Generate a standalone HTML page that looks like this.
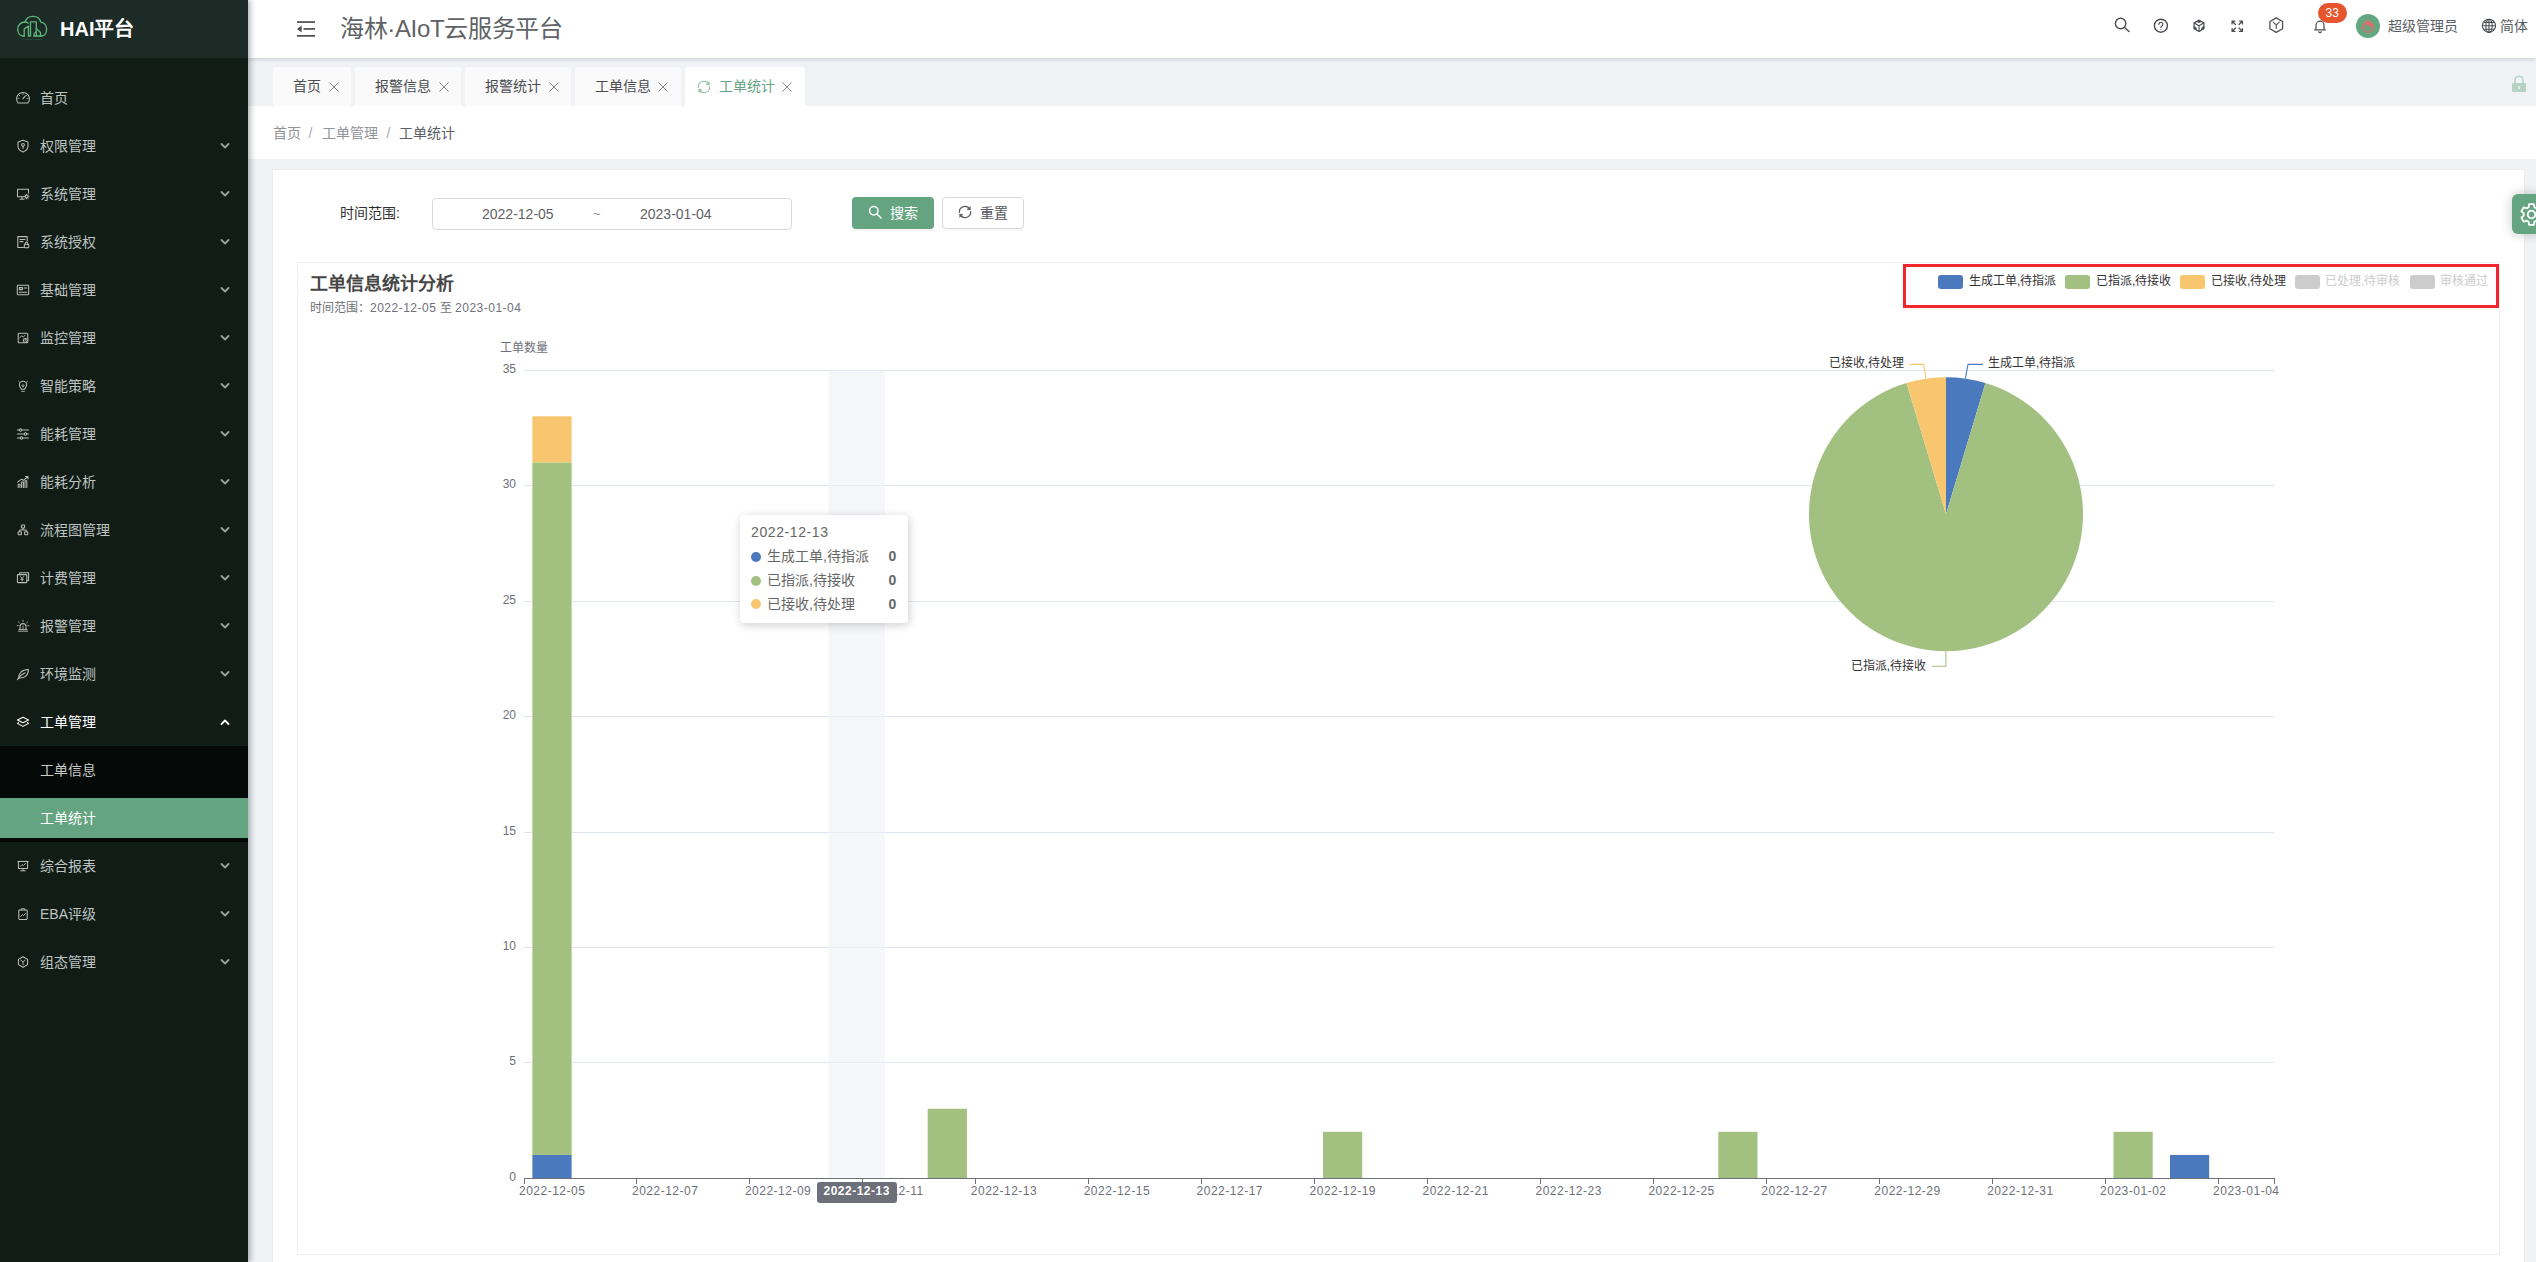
<!DOCTYPE html>
<html lang="zh-CN">
<head>
<meta charset="utf-8">
<title>海林·AIoT云服务平台</title>
<style>
*{box-sizing:border-box;}
html,body{margin:0;padding:0;}
body{width:2536px;height:1262px;overflow:hidden;background:#f0f2f5;font-family:"Liberation Sans",sans-serif;font-size:14px;color:#606266;position:relative;}
.abs{position:absolute;}
svg{display:block;overflow:visible;}
/* sidebar */
#side{position:absolute;left:0;top:0;width:248px;height:1262px;background:#111c17;box-shadow:2px 0 6px rgba(0,21,41,.35);z-index:5;}
#logo{position:absolute;left:0;top:0;width:248px;height:58px;background:#1c2b25;}
#logo .t{position:absolute;left:60px;top:16px;font-size:20px;line-height:26px;font-weight:bold;color:#fff;white-space:nowrap;}
.mi{position:absolute;left:0;width:248px;height:48px;line-height:48px;color:#bfc4c1;font-size:14px;white-space:nowrap;}
.mi .tx{position:absolute;left:40px;top:0;}
.mi svg.ic{position:absolute;left:16px;top:17px;width:14px;height:14px;}
.mi svg.ar{position:absolute;left:220px;top:20px;width:10px;height:8px;}
/* header */
#head{position:absolute;left:248px;top:0;width:2288px;height:58px;background:#fff;box-shadow:0 1px 5px rgba(0,21,41,.18);z-index:3;}
#head .title{position:absolute;left:92px;top:11px;font-size:24px;line-height:36px;color:#606266;white-space:nowrap;letter-spacing:-0.35px;}
#head .hi{position:absolute;}
/* tabs */
#tabs{position:absolute;left:248px;top:58px;width:2288px;height:48px;background:#f0f2f5;}
.tab{position:absolute;top:9px;height:39px;background:#fafafa;border-radius:4px 4px 0 0;font-size:14px;line-height:38px;color:#4a4d52;white-space:nowrap;}
.tab .tx{position:absolute;top:0;}
.tab svg.x{position:absolute;top:14.500px;width:10px;height:10px;}
.tab.on{background:#fff;color:#64a480;}
/* breadcrumb */
#crumb{position:absolute;left:248px;top:106px;width:2288px;height:53px;background:#fff;font-size:14px;line-height:55px;color:#909399;white-space:nowrap;}
/* card */
#card{position:absolute;left:272px;top:169px;width:2253px;height:1100px;background:#fff;border:1px solid #ececec;}
#chartbox{position:absolute;left:297px;top:262px;width:2203px;height:993px;border:1px solid #eeeeee;background:#fff;}
.lbl{position:absolute;white-space:nowrap;}
.ct{position:absolute;white-space:nowrap;font-size:12px;line-height:14px;color:#6e7079;}
.dl{letter-spacing:0.5px;}
</style>
</head>
<body>

<div id="side">
  <div id="logo">
    <svg class="abs" style="left:16.800px;top:15px;width:30.400px;height:24.700px" viewBox="0 0 32 26" fill="none" stroke="#5db779" stroke-width="1.4" stroke-linecap="round" stroke-linejoin="round">
      <path d="M7.6 22.1 H5.8 C2.800 21.700 .800 18.600 .800 14.900 C.800 10.700 4.100 7.400 8.300 7.400 C9.700 7.400 10.900 7.800 11.900 8.600"/>
      <path d="M8.400 7.500 C9.400 3.900 12.800 1.400 16.800 1.400 C20.800 1.400 24.100 3.900 25.100 7.500 C28.600 8 31.200 11.100 31.200 15 C31.200 18.700 29 21.700 26.300 22.100 H17.600"/>
      <path d="M7.600 22.100 V14.600 L12 11.600 V22.100 H14.200 V7.200 H20.300 V22.100"/>
      <path d="M20.300 14.100 L24.700 18.500 V22.100"/>
      <path d="M18 22.100 V19.400 L20.300 17.600" stroke-width="1.1"/>
      <text x="16" y="26.400" text-anchor="middle" font-size="2.600" font-family="Liberation Sans, sans-serif" fill="#4f9a67" fill-opacity=".7" stroke="none" textLength="21.500" lengthAdjust="spacingAndGlyphs">HAILIN PLATFORM</text>
    </svg>
    <div class="t">HAI平台</div>
  </div>
  <div class="mi" style="top:74px"><svg class="ic" viewBox="0 0 14 14" style="color:#b9beba" fill="none" stroke="currentColor" stroke-width="1.05" stroke-linecap="round" stroke-linejoin="round"><path d="M2.100 12 A6.400 6.400 0 1 1 11.900 12 Z"/><path d="M6.800 7.800 L9.300 4.900"/><path d="M7 2.6v1M3.2 4.2l.7.7M10.8 4.2l-.7.7M2 7.4h1M11 7.4h1" stroke-width=".8"/></svg><span class="tx">首页</span></div>
  <div class="mi" style="top:122px"><svg class="ic" viewBox="0 0 14 14" style="color:#b9beba" fill="none" stroke="currentColor" stroke-width="1.05" stroke-linecap="round" stroke-linejoin="round"><path d="M7 1.2 L12 2.9 V7 C12 10 9.8 12 7 13 C4.2 12 2 10 2 7 V2.9 Z"/><circle cx="7" cy="5.8" r="1.4"/><path d="M7 7.2V9.6"/></svg><span class="tx">权限管理</span><svg class="ar" viewBox="0 0 10 8" fill="none" stroke="#9aa09c" stroke-width="1.8" stroke-linecap="round" stroke-linejoin="round"><path d="M1.5 2L5 5.5L8.5 2"/></svg></div>
  <div class="mi" style="top:170px"><svg class="ic" viewBox="0 0 14 14" style="color:#b9beba" fill="none" stroke="currentColor" stroke-width="1.05" stroke-linecap="round" stroke-linejoin="round"><path d="M8 9.8H1.5V2.2H12.5V6"/><path d="M4 12.3H8M6 9.8V12.3"/><circle cx="10.6" cy="9.6" r="1.5"/><path d="M10.6 7.2v.9M10.6 11.1v.9M8.2 9.6h.9M12.1 9.6h.9M8.9 7.9l.6.6M11.7 10.7l.6.6M8.9 11.3l.6-.6M11.7 8.5l.6-.6" stroke-width=".8"/></svg><span class="tx">系统管理</span><svg class="ar" viewBox="0 0 10 8" fill="none" stroke="#9aa09c" stroke-width="1.8" stroke-linecap="round" stroke-linejoin="round"><path d="M1.5 2L5 5.5L8.5 2"/></svg></div>
  <div class="mi" style="top:218px"><svg class="ic" viewBox="0 0 14 14" style="color:#b9beba" fill="none" stroke="currentColor" stroke-width="1.05" stroke-linecap="round" stroke-linejoin="round"><path d="M7.5 12.4H1.8V1.6H11.2V6"/><path d="M4 4.4H9M4 6.6H7"/><rect x="8.3" y="9.2" width="4.4" height="3.6" rx=".5"/><path d="M9.3 9.2V8.2a1.2 1.2 0 0 1 2.4 0V9.2"/></svg><span class="tx">系统授权</span><svg class="ar" viewBox="0 0 10 8" fill="none" stroke="#9aa09c" stroke-width="1.8" stroke-linecap="round" stroke-linejoin="round"><path d="M1.5 2L5 5.5L8.5 2"/></svg></div>
  <div class="mi" style="top:266px"><svg class="ic" viewBox="0 0 14 14" style="color:#b9beba" fill="none" stroke="currentColor" stroke-width="1.05" stroke-linecap="round" stroke-linejoin="round"><rect x="1.3" y="2.3" width="11.4" height="9.4" rx=".6"/><path d="M3.4 4.6H6.4V6.6H3.4ZM8 5H10.8M3.4 9.2H10.8"/></svg><span class="tx">基础管理</span><svg class="ar" viewBox="0 0 10 8" fill="none" stroke="#9aa09c" stroke-width="1.8" stroke-linecap="round" stroke-linejoin="round"><path d="M1.5 2L5 5.5L8.5 2"/></svg></div>
  <div class="mi" style="top:314px"><svg class="ic" viewBox="0 0 14 14" style="color:#b9beba" fill="none" stroke="currentColor" stroke-width="1.05" stroke-linecap="round" stroke-linejoin="round"><rect x="2.200" y="2.200" width="9.600" height="9.600" rx="1"/><path d="M3.800 6.800L5.600 4.800L7.200 5.800L9 4.400" stroke-width=".9"/><circle cx="9.300" cy="9.400" r="1.900"/><path d="M9.300 9.400V8.400" stroke-width=".9"/></svg><span class="tx">监控管理</span><svg class="ar" viewBox="0 0 10 8" fill="none" stroke="#9aa09c" stroke-width="1.8" stroke-linecap="round" stroke-linejoin="round"><path d="M1.5 2L5 5.5L8.5 2"/></svg></div>
  <div class="mi" style="top:362px"><svg class="ic" viewBox="0 0 14 14" style="color:#b9beba" fill="none" stroke="currentColor" stroke-width="1.05" stroke-linecap="round" stroke-linejoin="round"><path d="M5.2 10.2C5.2 8.9 3.4 8.2 3.4 5.8a3.6 3.6 0 0 1 7.2 0C10.6 8.2 8.8 8.9 8.8 10.2Z"/><path d="M5.600 12.300H8.400M7 5.600V7.800M5.900 6.600L7 7.800L8.100 6.600M2.600 2.200L3.400 3M11.400 2.200L10.600 3" stroke-width=".9"/></svg><span class="tx">智能策略</span><svg class="ar" viewBox="0 0 10 8" fill="none" stroke="#9aa09c" stroke-width="1.8" stroke-linecap="round" stroke-linejoin="round"><path d="M1.5 2L5 5.5L8.5 2"/></svg></div>
  <div class="mi" style="top:410px"><svg class="ic" viewBox="0 0 14 14" style="color:#b9beba" fill="none" stroke="currentColor" stroke-width="1.05" stroke-linecap="round" stroke-linejoin="round"><path d="M1.4 3H12.6M1.4 7H12.6M1.4 11H12.6"/><circle cx="4.5" cy="3" r="1.2" fill="#111c17"/><circle cx="9.5" cy="7" r="1.2" fill="#111c17"/><circle cx="5.5" cy="11" r="1.2" fill="#111c17"/></svg><span class="tx">能耗管理</span><svg class="ar" viewBox="0 0 10 8" fill="none" stroke="#9aa09c" stroke-width="1.8" stroke-linecap="round" stroke-linejoin="round"><path d="M1.5 2L5 5.5L8.5 2"/></svg></div>
  <div class="mi" style="top:458px"><svg class="ic" viewBox="0 0 14 14" style="color:#b9beba" fill="none" stroke="currentColor" stroke-width="1.05" stroke-linecap="round" stroke-linejoin="round"><path d="M2.2 12.4V9.2H4V12.4M5.6 12.4V7H7.4V12.4M9 12.4V5.8H10.8V12.4"/><path d="M1.6 7.2L5.6 4.2L7.4 5.4L11.8 1.8M9.6 1.6H12V4"/></svg><span class="tx">能耗分析</span><svg class="ar" viewBox="0 0 10 8" fill="none" stroke="#9aa09c" stroke-width="1.8" stroke-linecap="round" stroke-linejoin="round"><path d="M1.5 2L5 5.5L8.5 2"/></svg></div>
  <div class="mi" style="top:506px"><svg class="ic" viewBox="0 0 14 14" style="color:#b9beba" fill="none" stroke="currentColor" stroke-width="1.05" stroke-linecap="round" stroke-linejoin="round"><rect x="5.400" y="2" width="3.200" height="3" rx=".6"/><rect x="2.200" y="8.800" width="3.200" height="3" rx=".6"/><rect x="8.600" y="8.800" width="3.200" height="3" rx=".6"/><path d="M7 5V7M3.800 8.800V7H10.200V8.800"/></svg><span class="tx">流程图管理</span><svg class="ar" viewBox="0 0 10 8" fill="none" stroke="#9aa09c" stroke-width="1.8" stroke-linecap="round" stroke-linejoin="round"><path d="M1.5 2L5 5.5L8.5 2"/></svg></div>
  <div class="mi" style="top:554px"><svg class="ic" viewBox="0 0 14 14" style="color:#b9beba" fill="none" stroke="currentColor" stroke-width="1.05" stroke-linecap="round" stroke-linejoin="round"><path d="M3.6 3.6V1.8H12.6V9.4H10.8"/><rect x="1.4" y="3.6" width="9.4" height="8" rx=".6"/><path d="M4.6 5.6L6.1 7.6L7.6 5.6M6.1 7.6V10.2M4.8 8.4H7.4" stroke-width=".9"/></svg><span class="tx">计费管理</span><svg class="ar" viewBox="0 0 10 8" fill="none" stroke="#9aa09c" stroke-width="1.8" stroke-linecap="round" stroke-linejoin="round"><path d="M1.5 2L5 5.5L8.5 2"/></svg></div>
  <div class="mi" style="top:602px"><svg class="ic" viewBox="0 0 14 14" style="color:#b9beba" fill="none" stroke="currentColor" stroke-width="1.05" stroke-linecap="round" stroke-linejoin="round"><path d="M4 10.6V7.6a3 3 0 0 1 6 0V10.6"/><path d="M2.4 12.2H11.6M3 10.6H11M7 1.2V2.4M2.4 3l.8.8M11.6 3l-.8.8M1.2 6.6H2.2M11.8 6.6H12.8" stroke-width=".9"/><path d="M7 7V10.6" stroke-width=".8"/></svg><span class="tx">报警管理</span><svg class="ar" viewBox="0 0 10 8" fill="none" stroke="#9aa09c" stroke-width="1.8" stroke-linecap="round" stroke-linejoin="round"><path d="M1.5 2L5 5.5L8.5 2"/></svg></div>
  <div class="mi" style="top:650px"><svg class="ic" viewBox="0 0 14 14" style="color:#b9beba" fill="none" stroke="currentColor" stroke-width="1.05" stroke-linecap="round" stroke-linejoin="round"><path d="M3 11C2.4 6.4 5.4 2.8 12.4 2.6C12.4 8.6 8.6 11.4 3 11Z"/><path d="M1.4 12.8C3 9.8 5.6 7.4 9 5.8"/></svg><span class="tx">环境监测</span><svg class="ar" viewBox="0 0 10 8" fill="none" stroke="#9aa09c" stroke-width="1.8" stroke-linecap="round" stroke-linejoin="round"><path d="M1.5 2L5 5.5L8.5 2"/></svg></div>
  <div class="mi" style="top:698px;color:#fff"><svg class="ic" viewBox="0 0 14 14" style="color:#fff" fill="none" stroke="currentColor" stroke-width="1.05" stroke-linecap="round" stroke-linejoin="round"><path d="M7 2.200L12.600 5L7 7.800L1.400 5Z"/><path d="M2.600 7.600L1.400 8.400L7 11.400L12.600 8.400L11.400 7.600"/></svg><span class="tx">工单管理</span><svg class="ar" viewBox="0 0 10 8" fill="none" stroke="#fff" stroke-width="1.8" stroke-linecap="round" stroke-linejoin="round"><path d="M1.5 6L5 2.5L8.5 6"/></svg></div>
  <div class="abs" style="left:0;top:746px;width:248px;height:96px;background:#050908"></div>
  <div class="mi" style="top:746px;color:#c8ccc9"><span class="tx">工单信息</span></div>
  <div class="abs" style="left:0;top:798px;width:248px;height:40px;background:#64a481"></div>
  <div class="mi" style="top:793.5px;color:#fff"><span class="tx">工单统计</span></div>
  <div class="mi" style="top:842px"><svg class="ic" viewBox="0 0 14 14" style="color:#b9beba" fill="none" stroke="currentColor" stroke-width="1.05" stroke-linecap="round" stroke-linejoin="round"><rect x="2.400" y="2.400" width="9.200" height="7" rx=".4"/><path d="M1.800 2.400H12.200M4.400 7.400L6 5.600L7.400 6.600L9.600 4.400M7 9.400V11.600M4.600 11.800H9.400" stroke-width=".95"/></svg><span class="tx">综合报表</span><svg class="ar" viewBox="0 0 10 8" fill="none" stroke="#9aa09c" stroke-width="1.8" stroke-linecap="round" stroke-linejoin="round"><path d="M1.5 2L5 5.5L8.5 2"/></svg></div>
  <div class="mi" style="top:890px"><svg class="ic" viewBox="0 0 14 14" style="color:#b9beba" fill="none" stroke="currentColor" stroke-width="1.05" stroke-linecap="round" stroke-linejoin="round"><rect x="2.800" y="3" width="8.400" height="9.400" rx=".8"/><path d="M5.200 3V1.800H8.800V3M4.800 9.400L6.400 7.600L7.600 8.600L9.400 6.600" stroke-width=".95"/></svg><span class="tx">EBA评级</span><svg class="ar" viewBox="0 0 10 8" fill="none" stroke="#9aa09c" stroke-width="1.8" stroke-linecap="round" stroke-linejoin="round"><path d="M1.5 2L5 5.5L8.5 2"/></svg></div>
  <div class="mi" style="top:938px"><svg class="ic" viewBox="0 0 14 14" style="color:#b9beba" fill="none" stroke="currentColor" stroke-width="1.05" stroke-linecap="round" stroke-linejoin="round"><path d="M7 1.800L11.600 4.400V9.600L7 12.200L2.400 9.600V4.400Z"/><path d="M4.800 5.200L7 6.800L9.200 5.200M7 6.800V9.800" stroke-width=".9"/></svg><span class="tx">组态管理</span><svg class="ar" viewBox="0 0 10 8" fill="none" stroke="#9aa09c" stroke-width="1.8" stroke-linecap="round" stroke-linejoin="round"><path d="M1.5 2L5 5.5L8.5 2"/></svg></div>
</div>
<div id="head">
  <svg class="abs" style="left:49px;top:20px;width:18px;height:18px" viewBox="0 0 18 18" fill="#4a4d52">
    <rect x="0" y="1.2" width="18" height="1.7"/><rect x="6.5" y="8.1" width="11.5" height="1.7"/><rect x="0" y="15" width="18" height="1.7"/><path d="M0 9 L4.6 5.6 V12.4 Z"/>
  </svg>
  <div class="title">海林·AIoT云服务平台</div>
  <svg class="hi" style="left:1865px;top:16px;width:18px;height:18px" viewBox="0 0 18 18" fill="none" stroke="#4a4d52" stroke-width="1.4" stroke-linecap="round" stroke-linejoin="round"><circle cx="7.6" cy="7.5" r="5.2"/><path d="M11.5 11.4L16 15.6"/></svg>
  <svg class="hi" style="left:1905px;top:18px;width:16px;height:16px" viewBox="0 0 16 16" fill="none" stroke="#4a4d52" stroke-width="1.4" stroke-linecap="round" stroke-linejoin="round"><circle cx="7.9" cy="7.7" r="6.5"/><path d="M5.9 6.3a2 2 0 1 1 3 1.7c-.7.4-1 .8-1 1.6" stroke-width="1.2"/><circle cx="7.9" cy="11.4" r=".5" fill="#4a4d52" stroke="none"/></svg>
  <svg class="hi" style="left:1944px;top:19px;width:14px;height:14px" viewBox="0 0 16 16" fill="none" stroke="#4a4d52" stroke-width="1.4" stroke-linecap="round" stroke-linejoin="round"><path d="M8 1.4L13.6 4.4V11L8 14.2L2.4 11V4.4Z"/><path d="M2.6 4.6L8 7.6L13.4 4.6M8 7.6V14" stroke-width="1.3"/><path d="M8 1.6L10.6 3L8 4.4L5.4 3Z M2.6 8.6L5 10V12.4L2.6 11Z M13.4 8.6L11 10V12.4L13.4 11Z" fill="#4a4d52" stroke-width=".6"/></svg>
  <svg class="hi" style="left:1983px;top:20px;width:12.5px;height:12.5px" viewBox="0 0 14 14" fill="none" stroke="#4a4d52" stroke-width="1.4" stroke-linecap="round" stroke-linejoin="round" stroke-width="1.4"><path d="M1.2 4.4V1.2H4.4M1.4 1.4L5 5M12.8 4.4V1.2H9.6M12.6 1.4L9 5M1.2 9.6V12.8H4.4M1.4 12.6L5 9M12.8 9.6V12.8H9.6M12.6 12.6L9 9"/></svg>
  <svg class="hi" style="left:2021px;top:17px;width:14.500px;height:16.300px" viewBox="0 0 16 18" fill="none" stroke="#4a4d52" stroke-width="1.4" stroke-linecap="round" stroke-linejoin="round" stroke-width="1.2"><path d="M8 1L15 5V13L8 17L1 13V5Z"/><path d="M4.6 5.6L8 8.6L11.4 5.6M8 8.6V12.6" stroke-width="1.2"/></svg>
  <svg class="hi" style="left:2065px;top:18px;width:14px;height:15.700px" viewBox="0 0 16 18" fill="none" stroke="#4a4d52" stroke-width="1.4" stroke-linecap="round" stroke-linejoin="round" stroke-width="1.4"><path d="M3.4 13.4V8.2a4.6 4.6 0 0 1 9.2 0V13.4M1.8 13.6H14.2M6.6 15.8a1.5 1.5 0 0 0 2.8 0"/></svg>
  <div class="abs" style="left:2070px;top:3px;width:28.500px;height:20px;border-radius:10px;background:#e5562f;color:#fff;font-size:12px;line-height:20px;text-align:center;z-index:2">33</div>
  <div class="abs" style="left:2108px;top:14px;width:24px;height:24px;border-radius:12px;background:#63a680"></div>
  <svg class="hi" style="left:2113px;top:19px;width:14px;height:14px" viewBox="0 0 14 14" fill="none" stroke="#d6716f" stroke-width="1.2" stroke-linecap="round"><path d="M1.3 7.6C1.3 4.6 3.4 2.700 6 2.300L6.900 .300L7.800 2.300C10.600 2.700 12.700 4.600 12.700 7.600C9.800 7.600 6.400 6.800 4.700 4.500C4.200 6 3 7.200 1.300 7.600Z" fill="#d6716f" stroke-width=".6"/><path d="M2.100 8.400C2.300 11.200 4.200 13.200 7 13.200C9.800 13.200 11.700 11.200 11.900 8.400"/><circle cx=".9" cy="8.800" r=".7" fill="#d6716f" stroke="none"/><circle cx="13.100" cy="8.800" r=".7" fill="#d6716f" stroke="none"/><path d="M4.500 8.300V9.600M9.500 8.300V9.600" stroke-width=".9"/></svg>
  <div class="abs" style="left:2140px;top:16px;font-size:14px;line-height:20px;color:#5a5e66;white-space:nowrap">超级管理员</div>
  <svg class="hi" style="left:2233px;top:18px;width:16px;height:16px" viewBox="0 0 16 16" fill="none" stroke="#4a4d52" stroke-width="1.1"><circle cx="8" cy="7.8" r="6.6"/><ellipse cx="8" cy="7.8" rx="3.2" ry="6.6"/><path d="M8 1.2V14.4M1.4 7.8H14.6M2.4 4.4H13.6M2.4 11.2H13.6"/></svg>
  <div class="abs" style="left:2252px;top:16px;font-size:14px;line-height:20px;color:#5a5e66;white-space:nowrap">简体</div>
</div>
<div id="tabs">
  <div class="tab" style="left:25px;width:78px"><span class="tx" style="left:20px">首页</span><svg class="x" style="left:56px" viewBox="0 0 10 10" fill="none" stroke="#85888c" stroke-width="1" stroke-linecap="round"><path d="M.7 .7L9.300 9.300M9.300 .7L.7 9.300"/></svg></div>
  <div class="tab" style="left:107px;width:106px"><span class="tx" style="left:20px">报警信息</span><svg class="x" style="left:84px" viewBox="0 0 10 10" fill="none" stroke="#85888c" stroke-width="1" stroke-linecap="round"><path d="M.7 .7L9.300 9.300M9.300 .7L.7 9.300"/></svg></div>
  <div class="tab" style="left:217px;width:106px"><span class="tx" style="left:20px">报警统计</span><svg class="x" style="left:84px" viewBox="0 0 10 10" fill="none" stroke="#85888c" stroke-width="1" stroke-linecap="round"><path d="M.7 .7L9.300 9.300M9.300 .7L.7 9.300"/></svg></div>
  <div class="tab" style="left:327px;width:106px"><span class="tx" style="left:20px">工单信息</span><svg class="x" style="left:83px" viewBox="0 0 10 10" fill="none" stroke="#85888c" stroke-width="1" stroke-linecap="round"><path d="M.7 .7L9.300 9.300M9.300 .7L.7 9.300"/></svg></div>
  <div class="tab on" style="left:437px;width:120px"><svg class="abs" style="left:12px;top:12.500px;width:14px;height:14px;color:#8fc0a4" viewBox="0 0 14 14" fill="none" stroke="currentColor" stroke-width="1.100" stroke-linecap="round" stroke-linejoin="round"><path d="M1.400 7.400A5.600 5.600 0 0 1 12 4.500M12.600 6.600A5.600 5.600 0 0 1 2 9.500"/><path d="M12.300 2L12.100 4.700L9.400 4.500Z M1.700 12L1.900 9.300L4.600 9.500Z" fill="currentColor" stroke-width=".6"/></svg><span class="tx" style="left:34px">工单统计</span><svg class="x" style="left:97px" viewBox="0 0 10 10" fill="none" stroke="#85888c" stroke-width="1" stroke-linecap="round"><path d="M.7 .7L9.300 9.300M9.300 .7L.7 9.300"/></svg></div>
  <svg class="abs" style="left:2263px;top:17px;width:16px;height:18px" viewBox="0 0 16 18" fill="none"><path d="M4 8V5.2a4 4 0 0 1 8 0V8" stroke="#b5d3c2" stroke-width="1.5"/><rect x="1" y="8" width="14" height="9" rx="1" fill="#b5d3c2"/><rect x="7.2" y="11" width="1.6" height="3" fill="#f0f2f5"/></svg>
</div>
<div id="crumb"><span class="abs" style="left:25px">首页</span><span class="abs" style="left:60.5px;color:#a8abb2">/</span><span class="abs" style="left:74px">工单管理</span><span class="abs" style="left:138.5px;color:#a8abb2">/</span><span class="abs" style="left:151px;color:#5a5e66">工单统计</span></div>
<div id="card"></div>
<div class="abs" style="left:2512px;top:194px;width:30px;height:40px;border-radius:6px 0 0 6px;background:#64a481;box-shadow:0 0 12px rgba(0,0,0,.22);z-index:2"><svg class="abs" style="left:8px;top:9px;width:23px;height:23px" viewBox="-11.500 -11.500 23 23" fill="none" stroke="#fff" stroke-width="1.800" stroke-linejoin="round"><circle cx="0" cy="0" r="3.800"/><path d="M-2.83 -7.38 L-2.38 -10.33 L2.38 -10.33 L2.83 -7.38 L4.97 -6.14 L7.75 -7.23 L10.14 -3.10 L7.80 -1.24 L7.80 1.24 L10.14 3.10 L7.75 7.23 L4.97 6.14 L2.83 7.38 L2.38 10.33 L-2.38 10.33 L-2.83 7.38 L-4.97 6.14 L-7.75 7.23 L-10.14 3.10 L-7.80 1.24 L-7.80 -1.24 L-10.14 -3.10 L-7.75 -7.23 L-4.97 -6.14Z"/></svg></div>
<div class="lbl" style="left:340px;top:203px;font-size:14px;line-height:20px;color:#303133">时间范围:</div>
<div class="abs" style="left:432px;top:198px;width:360px;height:32px;border:1px solid #d9d9d9;border-radius:4px;background:#fff"></div>
<div class="lbl" style="left:482px;top:204px;font-size:14px;line-height:20px;color:#606266" id="d1">2022-12-05</div>
<div class="lbl" style="left:593px;top:204px;font-size:13px;line-height:20px;color:#8a8d93">~</div>
<div class="lbl" style="left:640px;top:204px;font-size:14px;line-height:20px;color:#606266" id="d2">2023-01-04</div>
<div class="abs" style="left:852px;top:197px;width:82px;height:32px;border-radius:4px;background:#64a481;box-shadow:0 2px 0 rgba(0,0,0,.045)"></div>
<svg class="abs" style="left:868px;top:205px;width:14px;height:14px" viewBox="0 0 14 14" fill="none" stroke="#fff" stroke-width="1.5" stroke-linecap="round"><circle cx="5.8" cy="5.8" r="4.2"/><path d="M9 9L13 13"/></svg>
<div class="lbl" style="left:890px;top:203px;font-size:14px;line-height:20px;color:#fff">搜索</div>
<div class="abs" style="left:942px;top:197px;width:82px;height:32px;border-radius:4px;border:1px solid #d9d9d9;background:#fff;box-shadow:0 2px 0 rgba(0,0,0,.03)"></div>
<svg class="abs" style="left:958px;top:205px;width:14px;height:14px;color:#55585e" viewBox="0 0 14 14" fill="none" stroke="currentColor" stroke-width="1.200" stroke-linecap="round" stroke-linejoin="round"><path d="M1.400 7.400A5.600 5.600 0 0 1 12 4.500M12.600 6.600A5.600 5.600 0 0 1 2 9.500"/><path d="M12.300 2L12.100 4.700L9.400 4.500Z M1.700 12L1.900 9.300L4.600 9.500Z" fill="currentColor" stroke-width=".6"/></svg>
<div class="lbl" style="left:980px;top:203px;font-size:14px;line-height:20px;color:#55585e">重置</div>
<div id="chartbox"></div>
<div class="lbl" style="left:310px;top:271.500px;font-size:18px;line-height:24px;font-weight:bold;color:#464646">工单信息统计分析</div>
<div class="lbl" style="left:310px;top:300px;font-size:12px;line-height:16px;color:#6e7079" id="sub">时间范围：<span class="dl">2022-12-05</span> 至 <span class="dl">2023-01-04</span></div>
<div class="abs" style="left:1903px;top:264px;width:596px;height:44px;border:3px solid #f3262f"></div>
<div class="abs" style="left:1938px;top:275px;width:25px;height:14px;border-radius:3px;background:#4b79bd"></div>
<div class="ct" style="left:1969px;top:274px;color:#333">生成工单,待指派</div>
<div class="abs" style="left:2065px;top:275px;width:25px;height:14px;border-radius:3px;background:#a2c181"></div>
<div class="ct" style="left:2096px;top:274px;color:#333">已指派,待接收</div>
<div class="abs" style="left:2180px;top:275px;width:25px;height:14px;border-radius:3px;background:#f7c66f"></div>
<div class="ct" style="left:2211px;top:274px;color:#333">已接收,待处理</div>
<div class="abs" style="left:2295px;top:275px;width:25px;height:14px;border-radius:3px;background:#ccc"></div>
<div class="ct" style="left:2325px;top:274px;color:#ccc">已处理,待审核</div>
<div class="abs" style="left:2410px;top:275px;width:25px;height:14px;border-radius:3px;background:#ccc"></div>
<div class="ct" style="left:2440px;top:274px;color:#ccc">审核通过</div>
<svg class="abs" style="left:0;top:0;width:2536px;height:1262px;z-index:1" viewBox="0 0 2536 1262">
<rect x="524.0" y="1062" width="1750.5" height="1" fill="#e0e6f1"/>
<rect x="524.0" y="947" width="1750.5" height="1" fill="#e0e6f1"/>
<rect x="524.0" y="832" width="1750.5" height="1" fill="#e0e6f1"/>
<rect x="524.0" y="716" width="1750.5" height="1" fill="#e0e6f1"/>
<rect x="524.0" y="601" width="1750.5" height="1" fill="#e0e6f1"/>
<rect x="524.0" y="485" width="1750.5" height="1" fill="#e0e6f1"/>
<rect x="524.0" y="370" width="1750.5" height="1" fill="#e0e6f1"/>
<rect x="828.5" y="370.4" width="56.4" height="806.9" fill="#eef0f7" fill-opacity=".55"/>
<rect x="532.4" y="1154.92" width="39.2" height="23.08" fill="#4b79bd"/>
<rect x="532.4" y="462.43" width="39.2" height="692.49" fill="#a2c181"/>
<rect x="532.4" y="416.27" width="39.2" height="46.17" fill="#f7c66f"/>
<rect x="927.7" y="1108.75" width="39.2" height="69.25" fill="#a2c181"/>
<rect x="1323.0" y="1131.83" width="39.2" height="46.17" fill="#a2c181"/>
<rect x="1718.3" y="1131.83" width="39.2" height="46.17" fill="#a2c181"/>
<rect x="2113.5" y="1131.83" width="39.2" height="46.17" fill="#a2c181"/>
<rect x="2170.0" y="1154.92" width="39.2" height="23.08" fill="#4b79bd"/>
<rect x="524.0" y="1178" width="1751.0" height="1" fill="#6e7079"/>
<rect x="524" y="1178" width="1" height="6" fill="#6e7079"/>
<rect x="636" y="1178" width="1" height="6" fill="#6e7079"/>
<rect x="749" y="1178" width="1" height="6" fill="#6e7079"/>
<rect x="862" y="1178" width="1" height="6" fill="#6e7079"/>
<rect x="975" y="1178" width="1" height="6" fill="#6e7079"/>
<rect x="1088" y="1178" width="1" height="6" fill="#6e7079"/>
<rect x="1201" y="1178" width="1" height="6" fill="#6e7079"/>
<rect x="1314" y="1178" width="1" height="6" fill="#6e7079"/>
<rect x="1427" y="1178" width="1" height="6" fill="#6e7079"/>
<rect x="1540" y="1178" width="1" height="6" fill="#6e7079"/>
<rect x="1653" y="1178" width="1" height="6" fill="#6e7079"/>
<rect x="1766" y="1178" width="1" height="6" fill="#6e7079"/>
<rect x="1879" y="1178" width="1" height="6" fill="#6e7079"/>
<rect x="1992" y="1178" width="1" height="6" fill="#6e7079"/>
<rect x="2105" y="1178" width="1" height="6" fill="#6e7079"/>
<rect x="2218" y="1178" width="1" height="6" fill="#6e7079"/>
<rect x="2274" y="1178" width="1" height="6" fill="#6e7079"/>
<path d="M1946.00 514.20 L1946.00 377.20 A137.0 137.0 0 0 1 1985.47 383.01 Z" fill="#4b79bd"/>
<path d="M1946.00 514.20 L1985.47 383.01 A137.0 137.0 0 1 1 1906.53 383.01 Z" fill="#a2c181"/>
<path d="M1946.00 514.20 L1906.53 383.01 A137.0 137.0 0 0 1 1946.00 377.20 Z" fill="#f7c66f"/>
<path d="M1965.3 378.6L1968 364.4H1983" fill="none" stroke="#4b79bd" stroke-width="1.1"/>
<path d="M1926 378.6L1923.600 364.400H1909.500" fill="none" stroke="#f7c66f" stroke-width="1.1"/>
<path d="M1945.9 651.4V666.300H1931.500" fill="none" stroke="#a2c181" stroke-width="1.1"/>
</svg>
<div class="ct" style="left:500px;top:341px">工单数量</div>
<div class="ct" style="left:456px;width:60px;text-align:right;top:1169.8px">0</div>
<div class="ct" style="left:456px;width:60px;text-align:right;top:1054.4px">5</div>
<div class="ct" style="left:456px;width:60px;text-align:right;top:939.0px">10</div>
<div class="ct" style="left:456px;width:60px;text-align:right;top:823.6px">15</div>
<div class="ct" style="left:456px;width:60px;text-align:right;top:708.1px">20</div>
<div class="ct" style="left:456px;width:60px;text-align:right;top:592.7px">25</div>
<div class="ct" style="left:456px;width:60px;text-align:right;top:477.3px">30</div>
<div class="ct" style="left:456px;width:60px;text-align:right;top:361.9px">35</div>
<div class="ct dl" style="left:502.2px;width:100px;text-align:center;top:1184px">2022-12-05</div>
<div class="ct dl" style="left:615.2px;width:100px;text-align:center;top:1184px">2022-12-07</div>
<div class="ct dl" style="left:728.1px;width:100px;text-align:center;top:1184px">2022-12-09</div>
<div class="ct dl" style="left:841.0px;width:100px;text-align:center;top:1184px">2022-12-11</div>
<div class="ct dl" style="left:954.0px;width:100px;text-align:center;top:1184px">2022-12-13</div>
<div class="ct dl" style="left:1066.9px;width:100px;text-align:center;top:1184px">2022-12-15</div>
<div class="ct dl" style="left:1179.8px;width:100px;text-align:center;top:1184px">2022-12-17</div>
<div class="ct dl" style="left:1292.8px;width:100px;text-align:center;top:1184px">2022-12-19</div>
<div class="ct dl" style="left:1405.7px;width:100px;text-align:center;top:1184px">2022-12-21</div>
<div class="ct dl" style="left:1518.7px;width:100px;text-align:center;top:1184px">2022-12-23</div>
<div class="ct dl" style="left:1631.6px;width:100px;text-align:center;top:1184px">2022-12-25</div>
<div class="ct dl" style="left:1744.5px;width:100px;text-align:center;top:1184px">2022-12-27</div>
<div class="ct dl" style="left:1857.5px;width:100px;text-align:center;top:1184px">2022-12-29</div>
<div class="ct dl" style="left:1970.4px;width:100px;text-align:center;top:1184px">2022-12-31</div>
<div class="ct dl" style="left:2083.3px;width:100px;text-align:center;top:1184px">2023-01-02</div>
<div class="ct dl" style="left:2196.3px;width:100px;text-align:center;top:1184px">2023-01-04</div>
<div class="abs" style="left:816.5px;top:1181.5px;width:80.5px;height:21.5px;border-radius:3px;background:#6e7079;z-index:2"></div>
<div class="ct dl" style="left:806.7px;width:100px;text-align:center;top:1184px;color:#fff;font-weight:bold;z-index:3">2022-12-13</div>
<div class="ct" style="left:1988px;top:355.500px;color:#333">生成工单,待指派</div>
<div class="ct" style="left:1704px;width:200px;text-align:right;top:355.500px;color:#333">已接收,待处理</div>
<div class="ct" style="left:1726px;width:200px;text-align:right;top:658.500px;color:#333">已指派,待接收</div>
<div class="abs" style="left:740px;top:514.500px;width:168px;height:108px;border-radius:4px;background:#fff;box-shadow:1px 2px 10px rgba(0,0,0,.2);z-index:4"></div>
<div class="lbl" style="left:751px;top:522px;font-size:14px;line-height:20px;color:#666;z-index:5;letter-spacing:.6px" id="tt">2022-12-13</div>
<div class="abs" style="left:751px;top:551.5px;width:10px;height:10px;border-radius:5px;background:#4b79bd;z-index:5"></div>
<div class="lbl" style="left:767px;top:546.0px;font-size:14px;line-height:20px;color:#666;z-index:5">生成工单,待指派</div>
<div class="lbl" style="left:888.5px;top:546.0px;font-size:14px;line-height:20px;color:#666;font-weight:bold;z-index:5">0</div>
<div class="abs" style="left:751px;top:575.5px;width:10px;height:10px;border-radius:5px;background:#a2c181;z-index:5"></div>
<div class="lbl" style="left:767px;top:570.0px;font-size:14px;line-height:20px;color:#666;z-index:5">已指派,待接收</div>
<div class="lbl" style="left:888.5px;top:570.0px;font-size:14px;line-height:20px;color:#666;font-weight:bold;z-index:5">0</div>
<div class="abs" style="left:751px;top:599.3px;width:10px;height:10px;border-radius:5px;background:#f7c66f;z-index:5"></div>
<div class="lbl" style="left:767px;top:593.8px;font-size:14px;line-height:20px;color:#666;z-index:5">已接收,待处理</div>
<div class="lbl" style="left:888.5px;top:593.8px;font-size:14px;line-height:20px;color:#666;font-weight:bold;z-index:5">0</div>
</body>
</html>
